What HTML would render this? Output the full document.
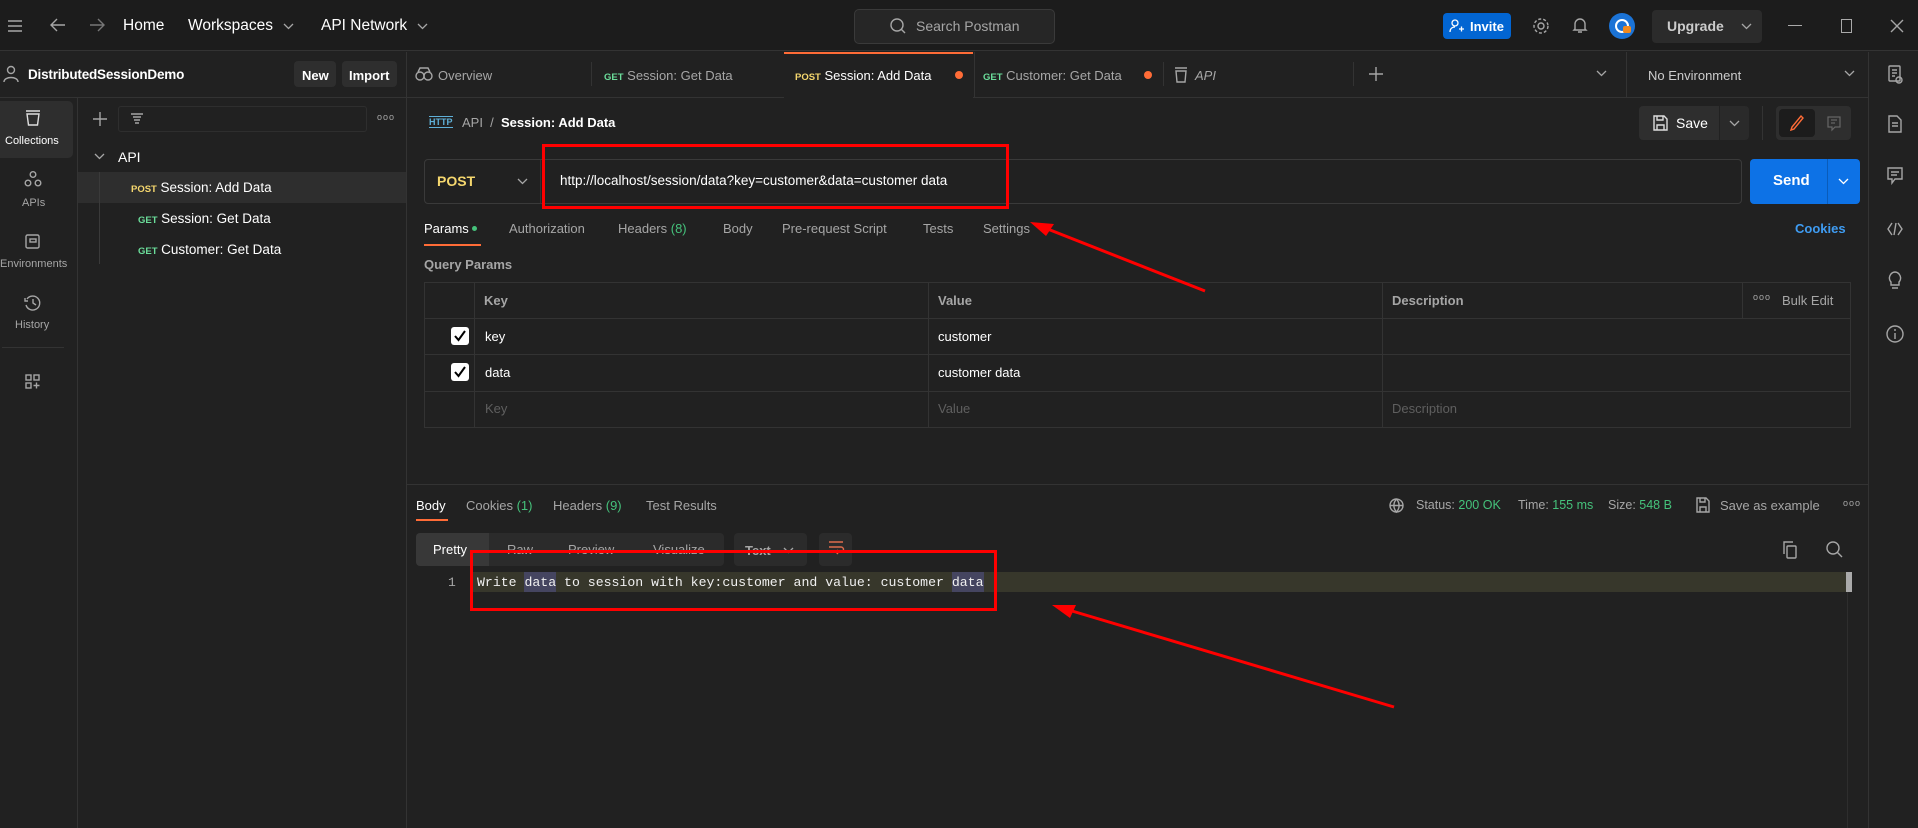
<!DOCTYPE html>
<html><head><meta charset="utf-8"><style>
*{box-sizing:border-box;margin:0;padding:0}
body{width:1918px;height:828px;background:#212121;font-family:"Liberation Sans",sans-serif;color:#e6e6e6;position:relative;overflow:hidden;font-size:13px}
.a{position:absolute;white-space:nowrap}
.g{color:#a6a6a6}
.post{color:#f5d76e;font-weight:bold;font-size:9.5px}
.get{color:#6bdd9a;font-weight:bold;font-size:9.5px}
.line{position:absolute;background:#333}
svg{position:absolute;overflow:visible}
.ic{stroke:#a6a6a6;fill:none;stroke-width:1.4}
.ch{stroke:#a6a6a6;fill:none;stroke-width:1.3}
.mono{font-family:"Liberation Mono",monospace}
</style></head><body>
<!-- title bar -->
<div class="a" style="left:0;top:0;width:1918px;height:51px;background:#1c1c1c;border-bottom:1px solid #333"></div>
<svg style="left:8px;top:20px" width="14" height="12"><path class="ic" d="M0 1H14M0 6H14M0 11H14"/></svg>
<svg style="left:50px;top:18px" width="16" height="14"><path class="ic" d="M15 7H1M7 1L1 7L7 13"/></svg>
<svg style="left:89px;top:18px" width="16" height="14"><path class="ic" d="M1 7H15M9 1L15 7L9 13" style="stroke:#777"/></svg>
<div class="a" style="left:123px;top:17px;font-size:15.5px;color:#fff">Home</div>
<div class="a" style="left:188px;top:17px;font-size:15.5px;color:#fff">Workspaces</div>
<svg style="left:284px;top:24px" width="9" height="5"><path class="ch" d="M0 0L4.5 4.5L9 0"/></svg>
<div class="a" style="left:321px;top:17px;font-size:15.5px;color:#fff">API Network</div>
<svg style="left:418px;top:24px" width="9" height="5"><path class="ch" d="M0 0L4.5 4.5L9 0"/></svg>
<div class="a" style="left:854px;top:9px;width:201px;height:35px;background:#262626;border:1px solid #3a3a3a;border-radius:5px"></div>
<svg style="left:890px;top:18px" width="16" height="16"><circle class="ic" cx="7" cy="7" r="6"/><path class="ic" d="M11 11L15 15"/></svg>
<div class="a g" style="left:916px;top:18px;font-size:14px">Search Postman</div>
<div class="a" style="left:1443px;top:13px;width:68px;height:26px;background:#0265d2;border-radius:4px;color:#fff;font-weight:bold;font-size:13px;padding:6px 0 0 27px">Invite</div>
<svg style="left:1450px;top:19px" width="14" height="14"><circle cx="5" cy="4" r="3" stroke="#fff" fill="none" stroke-width="1.3"/><path d="M0 13C0 9 3 8 5 8M9 10H14M11.5 7.5V12.5" stroke="#fff" fill="none" stroke-width="1.3"/></svg>
<svg style="left:1533px;top:18px" width="16" height="16"><circle class="ic" cx="8" cy="8" r="3"/><circle class="ic" cx="8" cy="8" r="7" stroke-dasharray="3 2"/></svg>
<svg style="left:1573px;top:17px" width="14" height="17"><path class="ic" d="M2 12V7A5 5 0 0 1 12 7V12L13 13H1ZM5 15H9"/></svg>
<div class="a" style="left:1609px;top:13px;width:26px;height:26px;border-radius:50%;background:#1b73d6"></div>
<div class="a" style="left:1615px;top:19px;width:14px;height:14px;border-radius:50%;border:2px solid #fff"></div>
<div class="a" style="left:1623px;top:26px;width:8px;height:7px;background:#f28a1e;border-radius:2px"></div>
<div class="a" style="left:1652px;top:10px;width:110px;height:33px;background:#2b2b2b;border-radius:4px"></div>
<div class="a" style="left:1667px;top:18px;font-size:14px;font-weight:bold;color:#ccc">Upgrade</div>
<svg style="left:1742px;top:24px" width="9" height="5"><path class="ch" d="M0 0L4.5 4.5L9 0"/></svg>
<div class="a" style="left:1788px;top:25px;width:14px;height:1px;background:#aaa"></div>
<div class="a" style="left:1841px;top:19px;width:11px;height:14px;border:1px solid #aaa"></div>
<svg style="left:1890px;top:19px" width="14" height="14"><path class="ic" d="M1 1L13 13M13 1L1 13"/></svg>

<!-- left icon bar -->
<div class="line" style="left:77px;top:98px;width:1px;height:730px"></div>
<div class="a" style="left:0;top:52px;width:406px;height:46px;border-bottom:1px solid #333"></div>
<svg style="left:4px;top:66px" width="14" height="16"><circle class="ic" cx="7" cy="4" r="3.5"/><path class="ic" d="M0 16C0 10 14 10 14 16"/></svg>
<div class="a" style="left:28px;top:67px;font-size:13.5px;font-weight:bold;color:#fff;letter-spacing:-0.2px">DistributedSessionDemo</div>
<div class="a" style="left:294px;top:61px;width:42px;height:26px;background:#2e2e2e;border-radius:4px;font-weight:bold;padding:7px 0 0 8px;color:#fff">New</div>
<div class="a" style="left:342px;top:61px;width:55px;height:26px;background:#2e2e2e;border-radius:4px;font-weight:bold;padding:7px 0 0 7px;color:#fff">Import</div>
<div class="a" style="left:0;top:101px;width:73px;height:57px;background:#2e2e2e;border-radius:0 5px 5px 0"></div>
<svg style="left:25px;top:110px" width="16" height="16"><path d="M1 1H15M2 4H14L12.5 15H3.5Z" stroke="#ddd" fill="none" stroke-width="1.4"/></svg>
<div class="a" style="left:5px;top:135px;font-size:11px;color:#fff">Collections</div>
<svg style="left:24px;top:171px" width="18" height="16"><circle class="ic" cx="9" cy="3.5" r="2.8"/><circle class="ic" cx="4" cy="12" r="2.8"/><circle class="ic" cx="14" cy="12" r="2.8"/></svg>
<div class="a g" style="left:22px;top:197px;font-size:11px">APIs</div>
<svg style="left:25px;top:234px" width="16" height="16"><rect class="ic" x="1" y="1" width="13" height="13" rx="1.5"/><rect class="ic" x="5" y="5" width="6" height="3"/></svg>
<div class="a g" style="left:0;top:258px;font-size:11px">Environments</div>
<svg style="left:24px;top:295px" width="17" height="16"><path class="ic" d="M3 4A7 7 0 1 1 2 10M1 3V6H4M9 4V8L12 10"/></svg>
<div class="a g" style="left:15px;top:319px;font-size:11px">History</div>
<div class="line" style="left:2px;top:347px;width:62px;height:1px"></div>
<svg style="left:25px;top:374px" width="15" height="15"><rect class="ic" x="1" y="1" width="5" height="5"/><rect class="ic" x="9" y="1" width="5" height="5"/><rect class="ic" x="1" y="9" width="5" height="5"/><path class="ic" d="M11.5 8.5V14.5M8.5 11.5H14.5"/></svg>

<!-- collections panel -->
<svg style="left:93px;top:112px" width="14" height="14"><path class="ic" d="M7 0V14M0 7H14"/></svg>
<div class="a" style="left:118px;top:106px;width:249px;height:26px;border:1px solid #2e2e2e;border-radius:3px"></div>
<svg style="left:131px;top:113px" width="12" height="12"><path class="ic" d="M0 1H12M2 4H10M3 7H9M4 10H8"/></svg>
<div class="a g" style="left:377px;top:112px;font-size:9px;letter-spacing:1px">ooo</div>
<svg style="left:95px;top:154px" width="9" height="5"><path class="ch" d="M0 0L4.5 4.5L9 0"/></svg>
<div class="a" style="left:118px;top:149px;font-size:14px;color:#fff">API</div>
<div class="a" style="left:78px;top:172px;width:328px;height:31px;background:#2e2e2e"></div>
<div class="line" style="left:99px;top:172px;width:1px;height:92px;background:#3a3a3a"></div>
<div class="a" style="left:131px;top:180px"><span class="post">POST</span> <span style="font-size:13.5px;color:#fff">Session: Add Data</span></div>
<div class="a" style="left:138px;top:211px"><span class="get">GET</span> <span style="font-size:13.5px;color:#fff">Session: Get Data</span></div>
<div class="a" style="left:138px;top:242px"><span class="get">GET</span> <span style="font-size:13.5px;color:#fff">Customer: Get Data</span></div>
<div class="line" style="left:406px;top:52px;width:1px;height:776px"></div>

<!-- tabs -->
<div class="line" style="left:406px;top:97px;width:1462px;height:1px"></div>
<svg style="left:415px;top:67px" width="18" height="14"><circle class="ic" cx="5" cy="9" r="4"/><circle class="ic" cx="13" cy="9" r="4"/><path class="ic" d="M3 5L5 1H13L15 5"/></svg>
<div class="a g" style="left:438px;top:68px;font-size:13px">Overview</div>
<div class="line" style="left:591px;top:62px;width:1px;height:24px"></div>
<div class="a" style="left:604px;top:68px"><span class="get">GET</span> <span class="g">Session: Get Data</span></div>
<div class="a" style="left:784px;top:52px;width:189px;height:46px;background:#212121;border-top:2px solid #ff6c37"></div>
<div class="a" style="left:795px;top:68px"><span class="post">POST</span> <span style="color:#fff">Session: Add Data</span></div>
<div class="a" style="left:955px;top:71px;width:8px;height:8px;border-radius:50%;background:#ff6c37"></div>
<div class="line" style="left:974px;top:52px;width:1px;height:46px"></div>
<div class="a" style="left:983px;top:68px"><span class="get">GET</span> <span class="g">Customer: Get Data</span></div>
<div class="a" style="left:1144px;top:71px;width:8px;height:8px;border-radius:50%;background:#ff6c37"></div>
<div class="line" style="left:1163px;top:62px;width:1px;height:24px"></div>
<svg style="left:1174px;top:67px" width="14" height="16"><path class="ic" d="M1 1H13M2 4H12L11 15H3Z"/></svg>
<div class="a g" style="left:1195px;top:68px;font-style:italic">API</div>
<div class="line" style="left:1353px;top:62px;width:1px;height:24px"></div>
<svg style="left:1369px;top:67px" width="14" height="14"><path class="ic" d="M7 0V14M0 7H14"/></svg>
<svg style="left:1597px;top:71px" width="9" height="5"><path class="ch" d="M0 0L4.5 4.5L9 0"/></svg>
<div class="line" style="left:1626px;top:52px;width:1px;height:46px"></div>
<div class="a" style="left:1648px;top:68px;color:#ccc">No Environment</div>
<svg style="left:1845px;top:71px" width="9" height="5"><path class="ch" d="M0 0L4.5 4.5L9 0"/></svg>
<div class="line" style="left:1868px;top:52px;width:1px;height:776px"></div>
<!-- right sidebar icons -->
<svg style="left:1888px;top:65px" width="14" height="20"><rect class="ic" x="1" y="1" width="11" height="15" rx="1"/><path class="ic" d="M4 5H9M4 8H9M4 11H7"/><circle class="ic" cx="11" cy="15" r="3"/></svg>
<svg style="left:1888px;top:115px" width="14" height="18"><path class="ic" d="M1 1H9L13 5V17H1Z M4 8H10M4 11H10"/></svg>
<svg style="left:1887px;top:167px" width="16" height="18"><path class="ic" d="M1 1H15V12H8L5 16V12H1Z M4 5H12M4 8H10"/></svg>
<svg style="left:1887px;top:222px" width="16" height="14"><path class="ic" d="M5 1L1 7L5 13M11 1L15 7L11 13M9 1L7 13"/></svg>
<svg style="left:1888px;top:271px" width="14" height="20"><path class="ic" d="M7 1A6 6 0 0 0 3 11V14H11V11A6 6 0 0 0 7 1ZM4 17H10"/></svg>
<svg style="left:1886px;top:325px" width="18" height="18"><circle class="ic" cx="9" cy="9" r="8"/><path class="ic" d="M9 8V14M9 4V6"/></svg>

<!-- breadcrumb -->
<div class="a" style="left:429px;top:116px;font-size:9px;color:#5fb0d8;font-weight:bold;border-bottom:1px solid #5fb0d8;border-top:1px solid #5fb0d8;line-height:10px">HTTP</div>
<div class="a g" style="left:462px;top:115px;font-size:13px">API &nbsp;/</div>
<div class="a" style="left:501px;top:115px;font-size:13px;font-weight:bold;color:#fff">Session: Add Data</div>
<div class="a" style="left:1639px;top:106px;width:80px;height:34px;background:#2e2e2e;border-radius:4px 0 0 4px"></div>
<svg style="left:1653px;top:115px" width="15" height="16"><path class="ic" d="M1 1H11L14 4V15H1Z M4 1V5H10V1M4 15V10H11V15" style="stroke:#ddd"/></svg>
<div class="a" style="left:1676px;top:115px;font-size:14px;color:#fff">Save</div>
<div class="a" style="left:1720px;top:106px;width:29px;height:34px;background:#2a2a2a;border-radius:0 4px 4px 0"></div>
<svg style="left:1730px;top:121px" width="9" height="5"><path class="ch" d="M0 0L4.5 4.5L9 0"/></svg>
<div class="line" style="left:1762px;top:106px;width:1px;height:34px"></div>
<div class="a" style="left:1776px;top:106px;width:75px;height:34px;background:#2e2e2e;border-radius:4px"></div>
<div class="a" style="left:1779px;top:109px;width:36px;height:28px;background:#1c1c1c;border-radius:4px"></div>
<svg style="left:1790px;top:115px" width="14" height="16"><path d="M11 1L13 3L4 14L1 15L2 12Z" stroke="#ff6c37" fill="none" stroke-width="1.4"/></svg>
<svg style="left:1827px;top:116px" width="14" height="15"><path d="M1 1H13V11H8L5 14V11H1ZM4 4H10M4 7H8" stroke="#666" fill="none" stroke-width="1.2"/></svg>

<!-- url bar -->
<div class="a" style="left:424px;top:159px;width:1318px;height:45px;border:1px solid #3a3a3a;border-radius:4px;background:#212121"></div>
<div class="a" style="left:437px;top:173px;font-size:14px;font-weight:bold;color:#f5d76e">POST</div>
<svg style="left:518px;top:179px" width="9" height="5"><path class="ch" d="M0 0L4.5 4.5L9 0"/></svg>
<div class="line" style="left:540px;top:160px;width:1px;height:43px"></div>
<div class="a" style="left:560px;top:173px;font-size:13.5px;color:#fff">http://localhost/session/data?key=customer&amp;data=customer data</div>
<div class="a" style="left:1750px;top:159px;width:110px;height:45px;background:#0d72e6;border-radius:4px"></div>
<div class="a" style="left:1773px;top:172px;font-size:15px;font-weight:bold;color:#fff">Send</div>
<div class="a" style="left:1827px;top:159px;width:1px;height:45px;background:#0a5cba"></div>
<svg style="left:1839px;top:179px" width="9" height="5"><path d="M0 0L4.5 4.5L9 0" stroke="#fff" fill="none" stroke-width="1.3"/></svg>

<!-- params tabs -->
<div class="a" style="left:424px;top:221px;font-size:13px;color:#fff">Params <span style="display:inline-block;width:5px;height:5px;border-radius:50%;background:#45c27b;vertical-align:2px"></span></div>
<div class="a" style="left:424px;top:244px;width:57px;height:2px;background:#ff6c37"></div>
<div class="a g" style="left:509px;top:221px">Authorization</div>
<div class="a g" style="left:618px;top:221px">Headers <span style="color:#45c27b">(8)</span></div>
<div class="a g" style="left:723px;top:221px">Body</div>
<div class="a g" style="left:782px;top:221px">Pre-request Script</div>
<div class="a g" style="left:923px;top:221px">Tests</div>
<div class="a g" style="left:983px;top:221px">Settings</div>
<div class="a" style="left:1795px;top:221px;color:#3f9cf2;font-weight:bold">Cookies</div>
<div class="a g" style="left:424px;top:257px;font-weight:bold">Query Params</div>

<!-- table -->
<div class="a" style="left:424px;top:282px;width:1427px;height:146px;border:1px solid #333"></div>
<div class="line" style="left:424px;top:318px;width:1427px;height:1px"></div>
<div class="line" style="left:424px;top:354px;width:1427px;height:1px"></div>
<div class="line" style="left:424px;top:391px;width:1427px;height:1px"></div>
<div class="line" style="left:474px;top:282px;width:1px;height:146px"></div>
<div class="line" style="left:928px;top:282px;width:1px;height:146px"></div>
<div class="line" style="left:1382px;top:282px;width:1px;height:146px"></div>
<div class="line" style="left:1742px;top:282px;width:1px;height:36px"></div>
<div class="a g" style="left:484px;top:293px;font-weight:bold">Key</div>
<div class="a g" style="left:938px;top:293px;font-weight:bold">Value</div>
<div class="a g" style="left:1392px;top:293px;font-weight:bold">Description</div>
<div class="a g" style="left:1753px;top:292px;font-size:9px;letter-spacing:1px">ooo</div>
<div class="a g" style="left:1782px;top:293px">Bulk Edit</div>
<div class="a" style="left:451px;top:327px;width:18px;height:18px;background:#fff;border-radius:3px"></div>
<svg style="left:454px;top:330px" width="12" height="12"><path d="M1 6L4.5 10L11 1" stroke="#000" stroke-width="2" fill="none"/></svg>
<div class="a" style="left:451px;top:363px;width:18px;height:18px;background:#fff;border-radius:3px"></div>
<svg style="left:454px;top:366px" width="12" height="12"><path d="M1 6L4.5 10L11 1" stroke="#000" stroke-width="2" fill="none"/></svg>
<div class="a" style="left:485px;top:329px;color:#fff">key</div>
<div class="a" style="left:938px;top:329px;color:#fff">customer</div>
<div class="a" style="left:485px;top:365px;color:#fff">data</div>
<div class="a" style="left:938px;top:365px;color:#fff">customer data</div>
<div class="a" style="left:485px;top:401px;color:#5f5f5f">Key</div>
<div class="a" style="left:938px;top:401px;color:#5f5f5f">Value</div>
<div class="a" style="left:1392px;top:401px;color:#5f5f5f">Description</div>

<!-- response -->
<div class="line" style="left:407px;top:484px;width:1461px;height:1px"></div>
<div class="a" style="left:416px;top:498px;color:#fff">Body</div>
<div class="a" style="left:416px;top:519px;width:32px;height:2px;background:#ff6c37"></div>
<div class="a g" style="left:466px;top:498px">Cookies <span style="color:#45c27b">(1)</span></div>
<div class="a g" style="left:553px;top:498px">Headers <span style="color:#45c27b">(9)</span></div>
<div class="a g" style="left:646px;top:498px">Test Results</div>
<svg style="left:1389px;top:498px" width="15" height="15"><circle class="ic" cx="7.5" cy="7.5" r="6.5"/><path class="ic" d="M1 7.5H14M7.5 1C4 5 4 10 7.5 14C11 10 11 5 7.5 1"/></svg>
<div class="a g" style="left:1416px;top:498px;font-size:12.5px">Status: <span style="color:#45c27b">200 OK</span></div>
<div class="a g" style="left:1518px;top:498px;font-size:12.5px">Time: <span style="color:#45c27b">155 ms</span></div>
<div class="a g" style="left:1608px;top:498px;font-size:12.5px">Size: <span style="color:#45c27b">548 B</span></div>
<svg style="left:1696px;top:497px" width="14" height="16"><path class="ic" d="M1 1H10L13 4V15H1Z M4 1V5H9V1M4 15V10H10V15"/></svg>
<div class="a g" style="left:1720px;top:498px;font-size:13px">Save as example</div>
<div class="a g" style="left:1843px;top:498px;font-size:9px;letter-spacing:1px">ooo</div>

<div class="a" style="left:416px;top:533px;width:308px;height:33px;background:#2b2b2b;border-radius:4px"></div>
<div class="a" style="left:416px;top:533px;width:73px;height:33px;background:#383838;border-radius:4px 0 0 4px"></div>
<div class="a" style="left:433px;top:542px;color:#fff">Pretty</div>
<div class="a g" style="left:507px;top:542px">Raw</div>
<div class="a g" style="left:568px;top:542px">Preview</div>
<div class="a g" style="left:653px;top:542px">Visualize</div>
<div class="a" style="left:734px;top:533px;width:73px;height:33px;background:#2b2b2b;border-radius:4px"></div>
<div class="a g" style="left:745px;top:543px;font-weight:bold">Text</div>
<svg style="left:784px;top:548px" width="9" height="5"><path class="ch" d="M0 0L4.5 4.5L9 0"/></svg>
<div class="a" style="left:819px;top:533px;width:33px;height:33px;background:#2b2b2b;border-radius:4px"></div>
<svg style="left:829px;top:541px" width="14" height="16"><path d="M0 1H14M0 6H12A2.5 2.5 0 0 1 12 11H7M0 11H4M9 9L7 11L9 13" stroke="#e06c4c" fill="none" stroke-width="1.4"/></svg>
<svg style="left:1782px;top:541px" width="16" height="18"><rect class="ic" x="5" y="5" width="9" height="12" rx="1"/><path class="ic" d="M2 13V1H11"/></svg>
<svg style="left:1826px;top:541px" width="17" height="18"><circle class="ic" cx="7" cy="7" r="6"/><path class="ic" d="M11.5 11.5L16 16"/></svg>

<div class="a" style="left:471px;top:572px;width:1376px;height:20px;background:#37372b"></div>
<div class="a" style="left:1846px;top:572px;width:6px;height:20px;background:#aaa"></div>
<div class="line" style="left:1847px;top:592px;width:1px;height:236px;background:#2e2e2e"></div>
<div class="a mono g" style="left:448px;top:575px;font-size:13px">1</div>
<div class="a" style="left:524px;top:572px;width:32px;height:20px;background:#454560"></div>
<div class="a" style="left:952px;top:572px;width:32px;height:20px;background:#454560"></div>
<div class="a mono" style="left:477px;top:575px;font-size:13.2px;color:#f0f0f0">Write data to session with key:customer and value: customer data</div>

<!-- annotations -->
<div class="a" style="left:542px;top:144px;width:467px;height:65px;border:3px solid #f00"></div>
<div class="a" style="left:470px;top:550px;width:527px;height:61px;border:3px solid #f00"></div>
<svg style="left:0;top:0" width="1918" height="828">
<line x1="1205" y1="291" x2="1040" y2="226" stroke="#f00" stroke-width="3"/>
<path d="M1030 222L1054 224L1046 236Z" fill="#f00"/>
<line x1="1394" y1="707" x2="1062" y2="608" stroke="#f00" stroke-width="3"/>
<path d="M1052 605L1076 605L1070 618Z" fill="#f00"/>
</svg>
</body></html>
